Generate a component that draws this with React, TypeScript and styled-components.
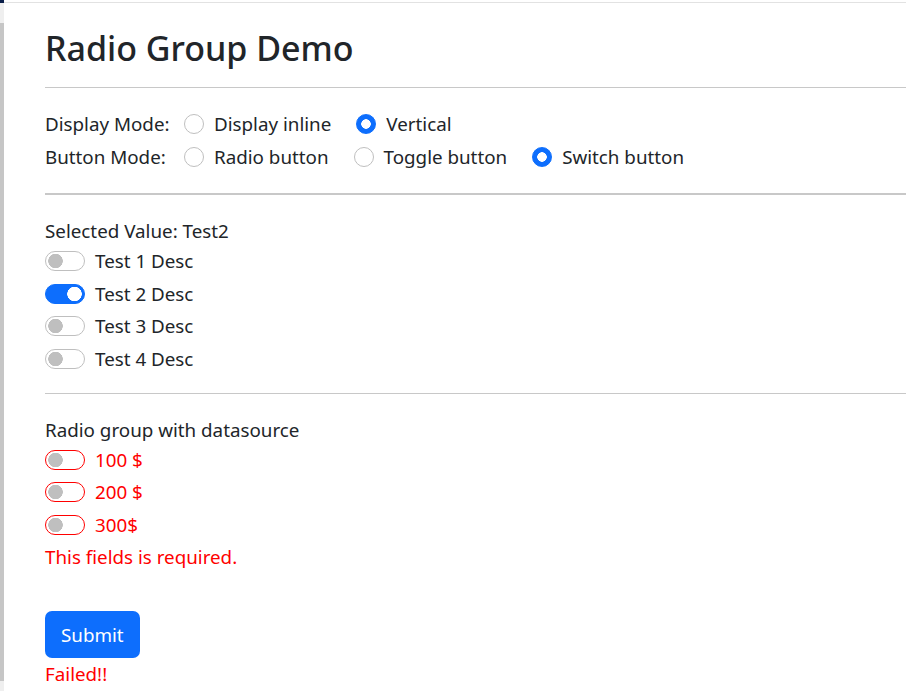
import React from 'react';
import styled, { createGlobalStyle } from 'styled-components';

const GlobalStyle = createGlobalStyle`
  html, body {
    margin: 0;
    padding: 0;
    background: #fff;
  }
  body {
    font-family: 'Noto Sans', 'Open Sans', sans-serif;
    font-size: 18.8px;
    line-height: 30px;
    color: #212529;
    overflow: hidden;
  }
`;

const Shell = styled.div`
  display: flex;
  min-height: 100vh;
`;

const Rail = styled.div`
  flex: 0 0 4px;
  background: linear-gradient(
    to bottom,
    #0b1f4a 0 3px,
    #efefef 3px 23px,
    #c6c6c6 23px 681px,
    #efefef 681px
  );
`;

const Main = styled.main`
  flex: 1;
  padding-top: 2px;
`;

const Content = styled.div`
  border-top: 1px solid #e2e2e2;
  padding-left: 41px;
`;

const Title = styled.h1`
  margin: 27px 0 0 0;
  font-size: 34px;
  line-height: 36px;
  font-weight: 500;
`;

const Rule = styled.hr<{ $thick?: boolean; $top?: number }>`
  border: 0;
  border-top: ${p => (p.$thick ? 2 : 1)}px solid #c8c8c8;
  margin: ${p => p.$top ?? 21}px 0 21px 0;
`;

const ModeRow = styled.div`
  display: flex;
  align-items: center;
  height: 30px;
  margin-bottom: 3px;
`;

const ModeLabel = styled.span`
  flex: none;
  width: 139px;
`;

const Option = styled.label`
  display: inline-flex;
  align-items: center;
  gap: 10px;
  margin-right: 25px;
`;

const Radio = styled.input.attrs({ type: 'radio' })`
  appearance: none;
  margin: 0;
  width: 20px;
  height: 20px;
  border: 1px solid #bfbfbf;
  border-radius: 50%;
  background: #fff;

  &:checked {
    border-color: #0d6efd;
    background: radial-gradient(circle, #fff 0 4.5px, #0d6efd 5px);
  }
`;

const SwitchRow = styled.label<{ $invalid?: boolean }>`
  display: flex;
  align-items: center;
  gap: 10px;
  height: 30px;
  margin-bottom: 2.5px;
  color: ${p => (p.$invalid ? '#ff0000' : 'inherit')};
`;

const Switch = styled.input.attrs({ type: 'checkbox', role: 'switch' })<{ $invalid?: boolean }>`
  appearance: none;
  margin: 0;
  width: 40px;
  height: 20px;
  box-sizing: border-box;
  border: 1px solid ${p => (p.$invalid ? '#ff0000' : '#bfbfbf')};
  border-radius: 10px;
  background: radial-gradient(circle at 9.5px 50%, #bfbfbf 0 7px, transparent 7.5px) #fff;

  &:checked {
    border-color: #0d6efd;
    background: radial-gradient(circle at 28.5px 50%, #fff 0 7px, transparent 7.5px) #0d6efd;
  }
`;

const Line = styled.div`
  height: 30px;
`;

const ErrorText = styled.div`
  color: #ff0000;
  margin-top: 2px;
  height: 30px;
`;

const SubmitButton = styled.button`
  display: block;
  margin-top: 39px;
  height: 47px;
  padding: 0 16px;
  border: 0;
  border-radius: 7px;
  background: #0d6efd;
  color: #fff;
  font: inherit;
`;

const Failed = styled.div`
  color: #ff0000;
  margin-top: 1px;
`;

const switches = [
  { id: 'Test1', label: 'Test 1 Desc' },
  { id: 'Test2', label: 'Test 2 Desc' },
  { id: 'Test3', label: 'Test 3 Desc' },
  { id: 'Test4', label: 'Test 4 Desc' },
];

const prices = ['100 $', '200 $', '300$'];

const App = () => {
  const selected = 'Test2';
  return (
    <>
      <GlobalStyle />
      <Shell>
        <Rail />
        <Main>
          <Content>
            <Title>Radio Group Demo</Title>
            <Rule />
            <ModeRow>
              <ModeLabel>Display Mode:</ModeLabel>
              <Option><Radio name="display" />Display inline</Option>
              <Option><Radio name="display" defaultChecked />Vertical</Option>
            </ModeRow>
            <ModeRow>
              <ModeLabel>Button Mode:</ModeLabel>
              <Option><Radio name="mode" />Radio button</Option>
              <Option><Radio name="mode" />Toggle button</Option>
              <Option><Radio name="mode" defaultChecked />Switch button</Option>
            </ModeRow>
            <Rule $thick />
            <Line>Selected Value: {selected}</Line>
            {switches.map(s => (
              <SwitchRow key={s.id}>
                <Switch name="group" defaultChecked={s.id === selected} />
                {s.label}
              </SwitchRow>
            ))}
            <Rule $top={19} />
            <Line>Radio group with datasource</Line>
            {prices.map(p => (
              <SwitchRow key={p} $invalid>
                <Switch name="price" $invalid />
                {p}
              </SwitchRow>
            ))}
            <ErrorText>This fields is required.</ErrorText>
            <SubmitButton>Submit</SubmitButton>
            <Failed>Failed!!</Failed>
          </Content>
        </Main>
      </Shell>
    </>
  );
};

export default App;
